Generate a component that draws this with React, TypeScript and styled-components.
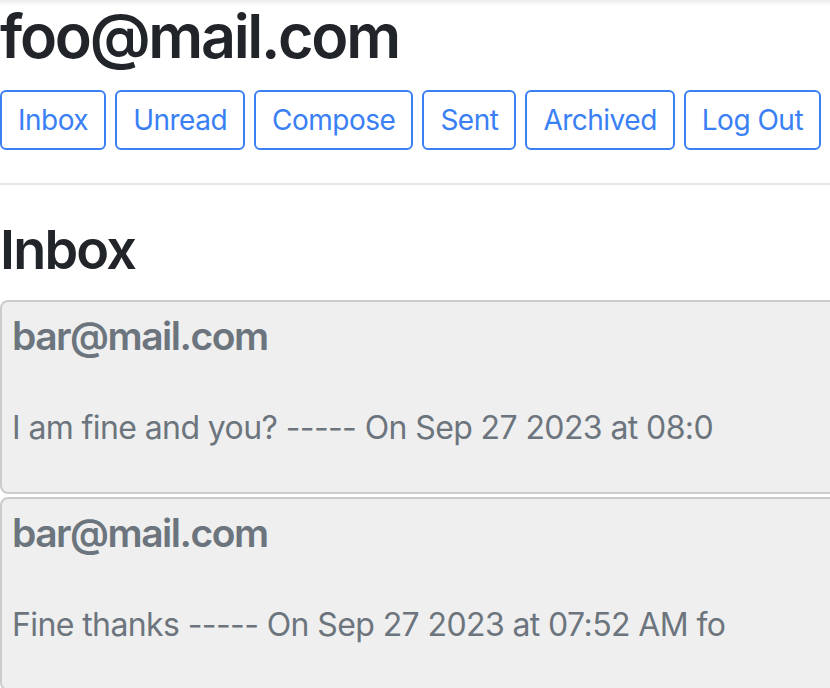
import React from 'react';
import styled, { createGlobalStyle } from 'styled-components';

interface Email {
  id: number;
  sender: string;
  preview: string;
}

const GlobalStyle = createGlobalStyle`
  html, body {
    margin: 0;
    padding: 0;
    overflow: hidden;
    background: linear-gradient(to bottom, #ebebeb 0, #ffffff 6px) no-repeat #ffffff;
    font-family: 'Inter', 'Liberation Sans', sans-serif;
    color: #212529;
  }
`;

const Page = styled.div`
  width: 1000px;
`;

const UserHeading = styled.h2`
  margin: 0 0 18px;
  font-size: 61px;
  line-height: 72px;
  font-weight: 600;
  letter-spacing: -2.3px;
  color: #212529;
`;

const Toolbar = styled.div`
  display: flex;
  gap: 9px;
`;

const NavButton = styled.button`
  height: 60px;
  padding: 0 16px;
  border: 2px solid #3a80f5;
  border-radius: 6px;
  background: #fff;
  color: #3a80f5;
  font-family: inherit;
  font-size: 28px;
  line-height: 56px;
  letter-spacing: -0.5px;
  cursor: pointer;
`;

const Divider = styled.hr`
  margin: 33px 0 0;
  border: 0;
  border-top: 2px solid #e5e5e5;
`;

const SectionHeading = styled.h3`
  margin: 33px 0 18px;
  font-size: 54px;
  line-height: 64px;
  font-weight: 600;
  letter-spacing: -1.8px;
  color: #212529;
`;

const EmailList = styled.div`
  display: flex;
  flex-direction: column;
  gap: 3px;
`;

const EmailCard = styled.div`
  padding: 10px;
  border: 2px solid #cccccc;
  border-radius: 8px;
  background-color: #efefef;
  color: #6c757d;
  cursor: pointer;
`;

const Sender = styled.h5`
  margin: 0;
  font-size: 39px;
  line-height: 48px;
  font-weight: 600;
  letter-spacing: -1.5px;
`;

const Preview = styled.p`
  margin: 44px 0 30px;
  font-size: 32px;
  line-height: 48px;
  letter-spacing: -0.6px;
  white-space: nowrap;
`;

const emails: Email[] = [
  { id: 1, sender: 'bar@mail.com', preview: 'I am fine and you? ----- On Sep 27 2023 at 08:0' },
  { id: 2, sender: 'bar@mail.com', preview: 'Fine thanks ----- On Sep 27 2023 at 07:52 AM fo' },
];

const navItems = ['Inbox', 'Unread', 'Compose', 'Sent', 'Archived', 'Log Out'];

const App: React.FC = () => {
  return (
    <Page>
      <GlobalStyle />
      <UserHeading>foo@mail.com</UserHeading>
      <Toolbar>
        {navItems.map(item => (
          <NavButton key={item}>{item}</NavButton>
        ))}
      </Toolbar>
      <Divider />
      <SectionHeading>Inbox</SectionHeading>
      <EmailList>
        {emails.map(email => (
          <EmailCard key={email.id}>
            <Sender>{email.sender}</Sender>
            <Preview>{email.preview}</Preview>
          </EmailCard>
        ))}
      </EmailList>
    </Page>
  );
};

export default App;
